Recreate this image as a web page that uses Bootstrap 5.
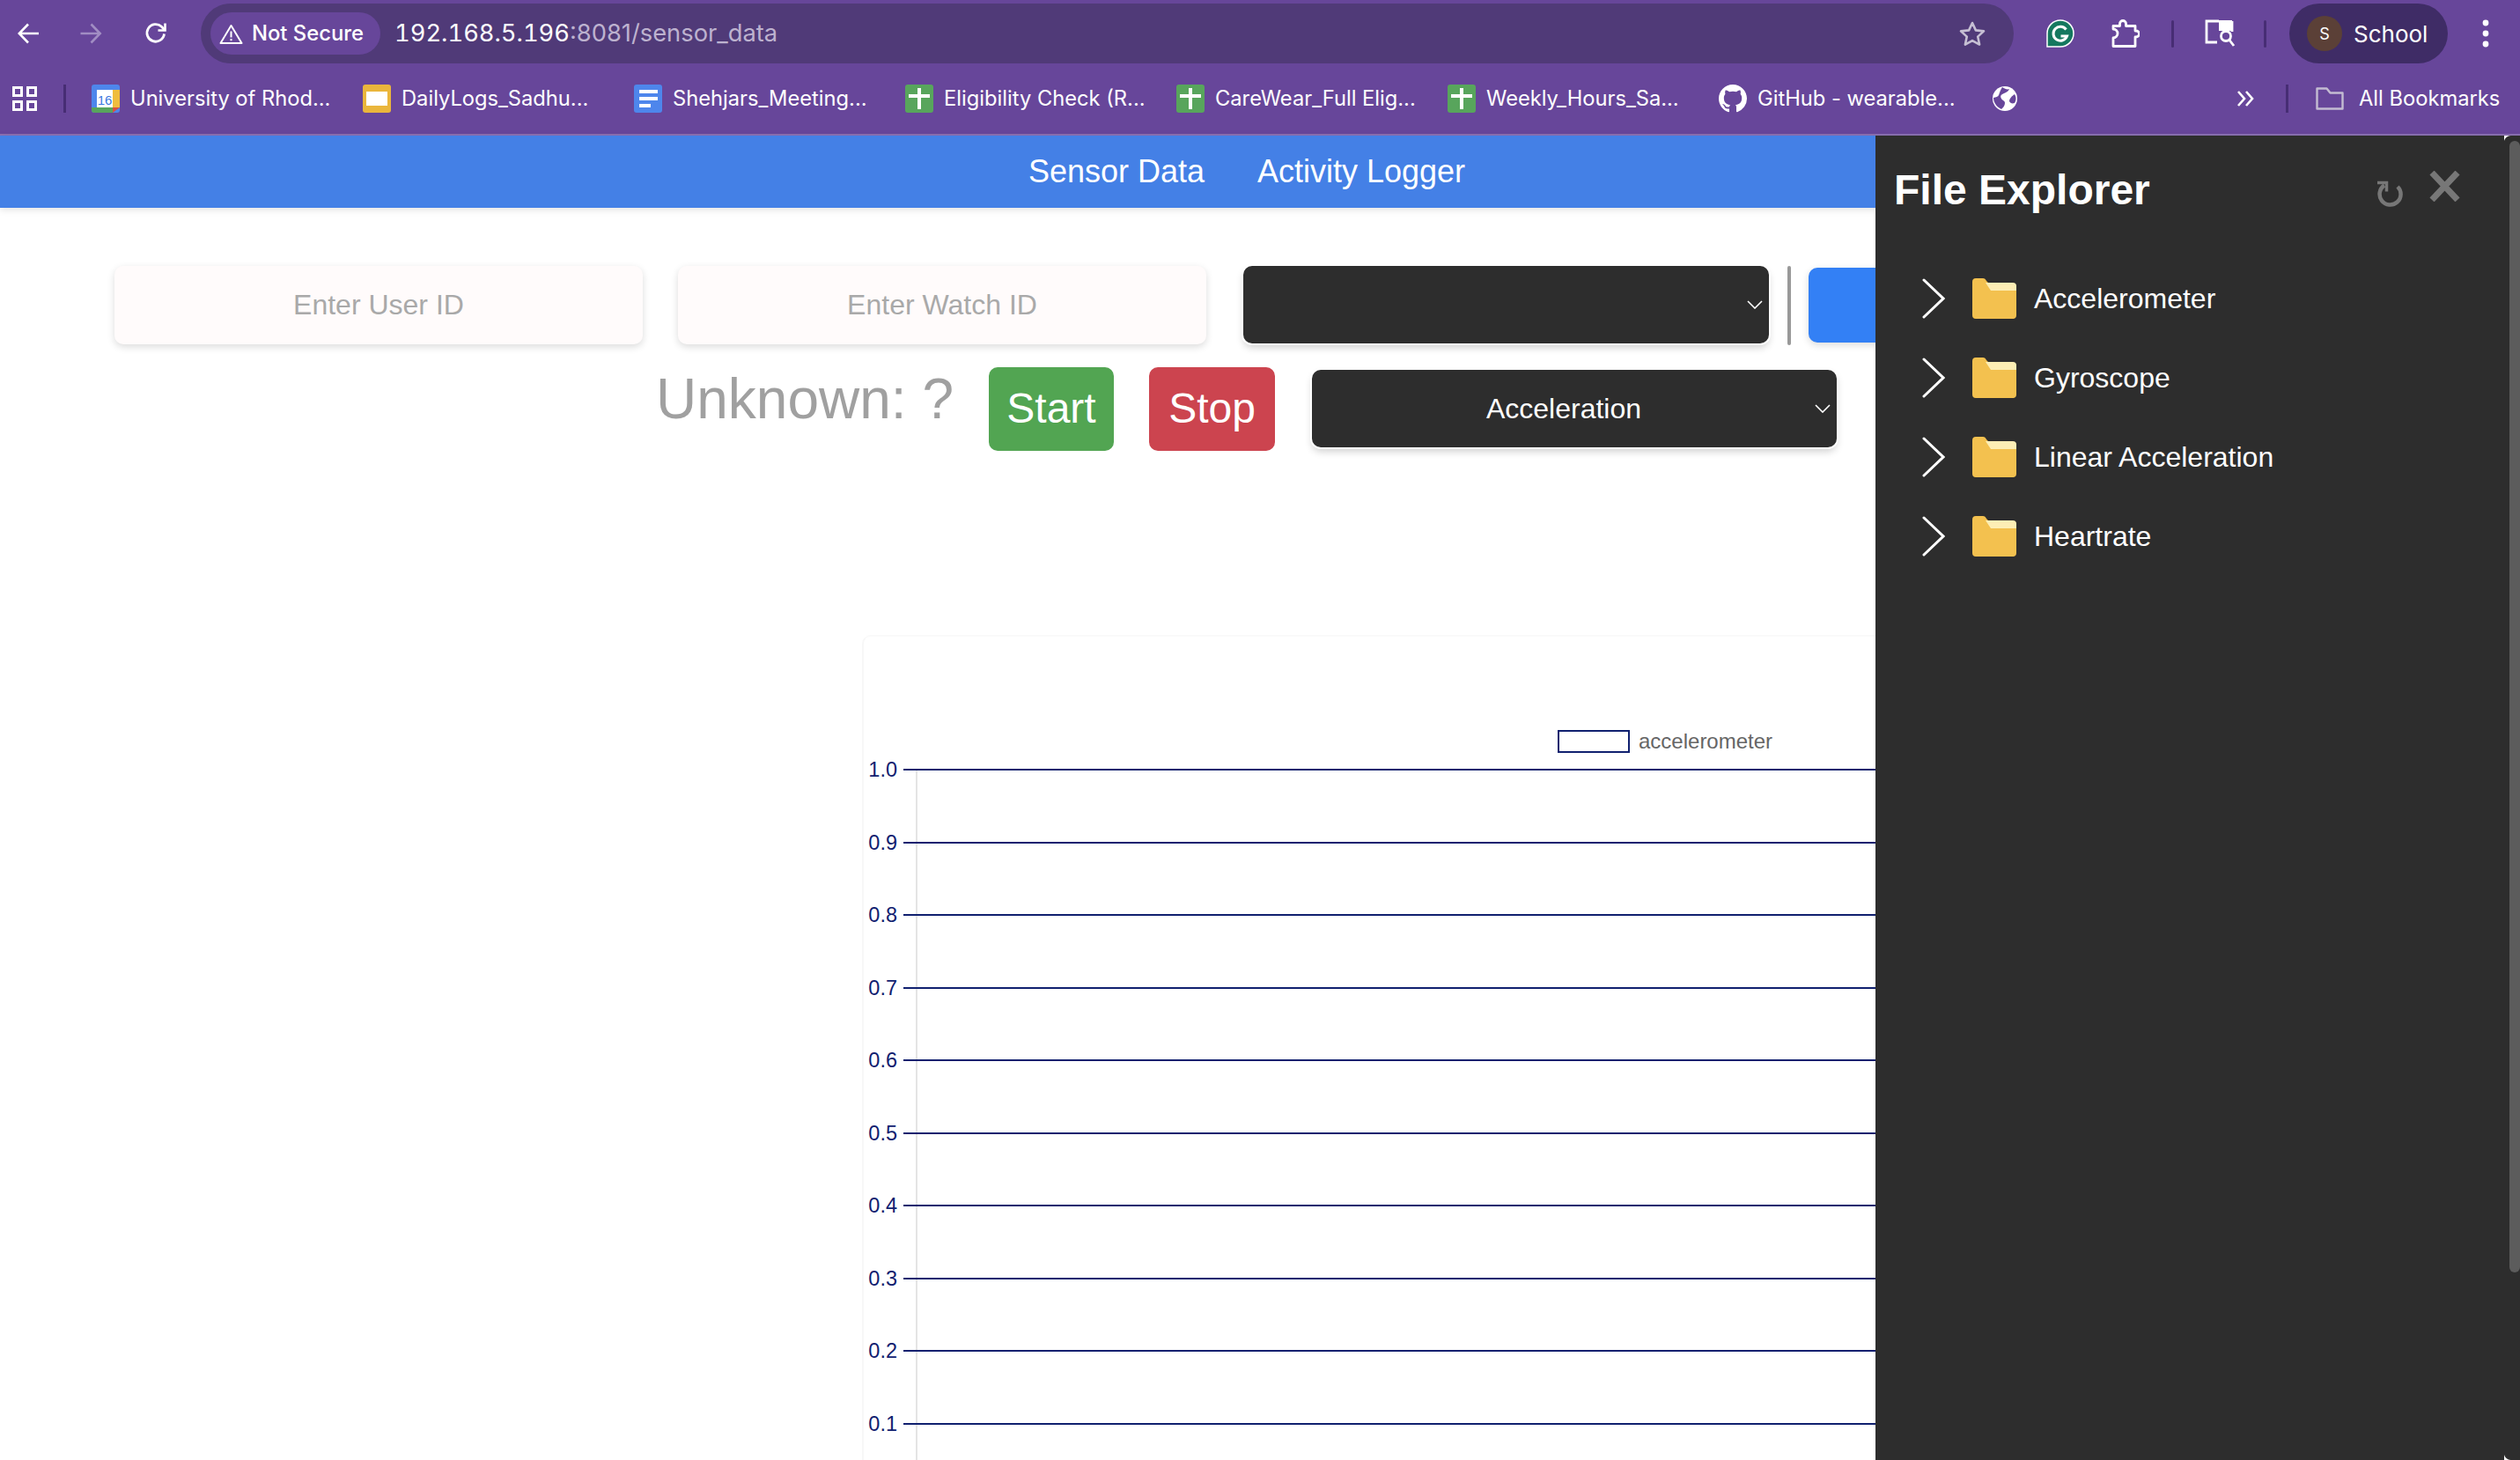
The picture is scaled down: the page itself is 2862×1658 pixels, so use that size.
<!DOCTYPE html>
<html lang="en">
<head>
  <meta charset="UTF-8">
  <meta name="viewport" content="width=device-width, initial-scale=1.0">
  <title>Sensor Data</title>
  <link href="https://cdn.jsdelivr.net/npm/bootstrap@5.3.3/dist/css/bootstrap.min.css" rel="stylesheet">
  <style>
    html, body {
      height: 1658px;
      overflow: hidden;
    }

    body {
      position: relative;
      background: #fff;
      font-family: "Liberation Sans", Arial, sans-serif;
    }

    /* browser chrome */
    .chrome {
      background: #67469a;
      border-bottom: 2px solid #8b70b3;
      color: #fff;
      font-family: Inter, "Liberation Sans", sans-serif;
    }

    .toolbar { height: 76px; }
    .toolbar svg, .marks svg { display: block; flex: none; }
    .t-back { margin-left: 20px; }
    .t-fwd { margin-left: 47px; }
    .t-reload { margin-left: 48px; }

    .addr {
      margin-left: 38px;
      width: 2059px;
      height: 68px;
      background: #503a78;
      border-radius: 34px;
      padding: 0 31px 0 11px;
    }

    .warn-pill {
      width: 193px;
      height: 48px;
      background: #67469a;
      border-radius: 24px;
      padding-left: 10px;
      gap: 10px;
      font-size: 23.8px;
      font-weight: 500;
    }

    .url {
      margin-left: 16px;
      font-size: 27.3px;
      color: #fff;
      font-variant-numeric: tabular-nums;
    }

    .url span { color: #bdb2cf; font-variant-numeric: normal; }
    .t-gram { margin-left: 37px; }
    .t-puzzle { margin-left: 42px; }
    .t-sep { width: 3px; height: 31px; background: #472d74; border-radius: 2px; flex: none; }
    .t-sep1 { margin-left: 36px; }
    .t-search { margin-left: 35px; }
    .t-sep2 { margin-left: 32px; }

    .profile {
      margin-left: 26px;
      width: 180px;
      height: 68px;
      background: #3f2c66;
      border-radius: 34px;
      padding-left: 20px;
      font-size: 26px;
    }

    .avatar {
      width: 40px;
      height: 40px;
      border-radius: 50%;
      background: #5b4037;
      font-size: 18px;
      margin-right: 13px;
    }

    .t-dots { margin-left: 39px; }

    .marks {
      height: 76px;
      padding-left: 14px;
      padding-bottom: 4px;
      font-size: 23.7px;
    }

    .mark-sep { width: 3px; height: 32px; background: #472d74; margin-left: 30px; margin-right: 29px; flex: none; }
    .mark-item { width: 308px; flex: none; gap: 12px; white-space: nowrap; }
    .mark-globe { margin-left: 3px; margin-right: 249px; }
    .mark-more { margin-right: 35px; }
    .mark-sep2 { margin: 0 31px 0 0; }
    .mark-all { margin-left: 17px; white-space: nowrap; }

    /* page */
    .top-nav {
      height: 82px;
      padding: 0 30px 0 0;
      background: #4480e6;
      box-shadow: 0 2px 8px rgba(0, 0, 0, .12);
    }

    .top-nav .nav-link {
      color: #fff;
      font-size: 36px;
      padding: 0 30px;
    }

    .form-one {
      margin-top: 66px;
      margin-left: 130px;
      width: 2300px;
    }

    .id-input {
      width: 600px;
      height: 89px;
      flex: none;
      background: #fffbfb;
      border: 0;
      border-radius: 10px;
      box-shadow: 0 3px 8px rgba(0, 0, 0, .14);
      font-size: 32px;
      text-align: center;
    }

    .id-input::placeholder { color: #a9a9a9; opacity: 1; }
    .id-gap { margin-left: 40px; }

    .dark-select {
      flex: none;
      width: 597px;
      height: 88px;
      background-color: #2d2d2d;
      background-image: url("data:image/svg+xml,%3csvg xmlns='http://www.w3.org/2000/svg' viewBox='0 0 18 10'%3e%3cpath fill='none' stroke='%23fff' stroke-width='1.6' d='M1 1l8 8 8-8'/%3e%3c/svg%3e");
      background-position: right 7px center;
      background-size: 18px 10px;
      border: 0;
      border-radius: 10px;
      box-shadow: 0 0 0 2px #fff, 0 5px 9px rgba(0, 0, 0, .18);
      color: #fff;
      font-size: 32px;
      text-align: center;
    }

    .select-gap { margin-left: 42px; }
    .v-rule { width: 4px; height: 90px; background: #999; margin-left: 21px; flex: none; border-radius: 2px; }

    .go-btn {
      width: 200px;
      height: 85px;
      flex: none;
      margin-left: 20px;
      margin-top: 2px;
      background: #3380f5;
      border: 0;
      border-radius: 10px;
      box-shadow: 0 3px 8px rgba(0, 0, 0, .14);
    }

    .form-two {
      margin-top: 24px;
      margin-left: 745px;
    }

    .state-label {
      font-size: 64px;
      line-height: 74px;
      color: #a0a0a0;
      margin-bottom: 22px;
      width: 378px;
      flex: none;
    }

    .act-btn {
      width: 142px;
      height: 95px;
      border: 0;
      border-radius: 10px;
      color: #fff;
      font-size: 48px;
      padding: 0;
      flex: none;
    }

    .btn-start { background: #52a552; }
    .btn-stop { background: #cc444f; margin-left: 40px; width: 143px; }
    .form-two .dark-select { margin-left: 42px; width: 596px; }

    .chart-box {
      margin-top: 209px;
      margin-left: 979px;
      width: 1300px;
      height: 937px;
      border: 0;
      border-left: 2px solid #f7f7f7;
      border-top: 2px solid #fafafa;
      border-radius: 10px 0 0 0;
      background: #fff;
    }

    .chart-box svg { display: block; margin: -2px 0 0 -2px; }

    /* file panel, drawn over the page */
    .file-panel {
      position: absolute;
      top: 154px;
      left: 2130px;
      right: 0;
      bottom: 0;
      background: #2d2d2d;
      color: #fff;
    }

    .panel-head {
      height: 140px;
      padding: 32px 68px 0 21px;
    }

    .panel-title {
      font-size: 48px;
      line-height: 60px;
      font-weight: 700;
      margin: 0;
    }

    .panel-tools { padding-top: 8px; gap: 29px; }
    .tool-refresh { margin-top: 11px; }
    .tree-row {
      height: 90px;
      padding-left: 53px;
      font-size: 32px;
    }

    .tree-row .folder { margin-left: 31px; margin-right: 20px; }
    .tree-row svg { display: block; flex: none; }

    .panel-scroll {
      position: absolute;
      top: 6px;
      right: 0;
      width: 12px;
      height: 1285px;
      background: #5c5c5c;
      border-radius: 6px;
    }

    .corner-top, .corner-bot { position: absolute; display: block; }
    .corner-top { top: 0; right: 10px; }
    .corner-bot { bottom: 0; right: 10px; }
  </style>
</head>
<body>
  <div class="chrome">
    <div class="toolbar d-flex align-items-center">
      <svg class="t-back" width="24" height="24" viewBox="0 0 24 24" fill="none" stroke="#fff" stroke-width="2.6"><path d="M24 12H2M12 1.5L1.8 12 12 22.5"/></svg>
      <svg class="t-fwd" width="25" height="24" viewBox="0 0 24 24" fill="none" stroke="#a18dc3" stroke-width="2.6"><path d="M0 12h22M12 1.5L22.2 12 12 22.5"/></svg>
      <svg class="t-reload" width="26" height="26" viewBox="0 0 26 26" fill="none" stroke="#fff" stroke-width="2.8"><path d="M22.5 13.5a9.8 9.8 0 1 1-3-8.2L23 9"/><path d="M23.5 1.5V9.5H15.5" stroke-width="2.6"/></svg>

      <div class="addr d-flex align-items-center flex-none">
        <div class="warn-pill d-flex align-items-center flex-shrink-0">
          <svg width="27" height="23" viewBox="0 0 27 23" fill="none" stroke="#fff" stroke-width="2"><path d="M13.5 2L25.5 22H1.5z" stroke-linejoin="round"/><path d="M13.5 8.5v7M13.5 17v2.2"/></svg>
          <span>Not Secure</span>
        </div>
        <div class="url">192.168.5.196<span>:8081/sensor_data</span></div>
        <svg class="ms-auto" width="32" height="30" viewBox="0 0 32 30" fill="none" stroke="#c6bfd3" stroke-width="2.6"><path d="M16 3l3.9 8.4 9.1 1-6.8 6.2 1.9 9L16 23.1 7.900 27.600l1.900-9L3 12.400l9.100-1z" stroke-linejoin="round"/></svg>
      </div>

      <svg class="t-gram" width="32" height="32" viewBox="0 0 32 32"><path d="M1 31V16a15 15 0 1 1 15 15z" fill="#15785f" stroke="#fff" stroke-width="1.500"/><path d="M22.500 11.500a8 8 0 1 0 1 7.500h-7" fill="none" stroke="#fff" stroke-width="3"/></svg>
      <svg class="t-puzzle" width="32" height="32" viewBox="0 0 32 32" fill="none" stroke="#fff" stroke-width="2.800"><path d="M2 7.500h7.500V5a3.500 3.500 0 0 1 7 0v2.500h10.500V13h1a3.500 3.500 0 0 1 0 7h-1v10.500H2V21a5 5 0 0 0 0-10z" stroke-linejoin="round"/></svg>
      <div class="t-sep t-sep1"></div>
      <svg class="t-search t-icon" width="35" height="32" viewBox="0 0 35 32" fill="none" stroke="#fff" stroke-width="2.800"><path d="M14 26H2V2h14"/><path d="M16 1h15v12H16z" fill="#fff" stroke="none"/><path d="M31 2v12"/><circle cx="24" cy="19" r="5.500"/><path d="M28 23.500l5 6.500"/></svg>
      <div class="t-sep t-sep2"></div>
      <div class="profile d-flex align-items-center flex-shrink-0">
        <div class="avatar d-flex align-items-center justify-content-center">S</div>
        <span>School</span>
      </div>
      <svg class="t-dots" width="8" height="32" viewBox="0 0 8 32" fill="#fff"><circle cx="4" cy="4" r="3.400"/><circle cx="4" cy="16" r="3.400"/><circle cx="4" cy="28" r="3.400"/></svg>
    </div>

    <div class="marks d-flex align-items-center">
      <svg width="28" height="28" viewBox="0 0 28 28" fill="none" stroke="#fff" stroke-width="3"><path d="M1.500 1.500h9v9h-9zM17.500 1.500h9v9h-9zM1.500 17.500h9v9h-9zM17.500 17.500h9v9h-9z"/></svg>
      <div class="mark-sep"></div>

      <div class="mark-item d-flex align-items-center">
        <svg width="32" height="32" viewBox="0 0 32 32">
          <rect width="32" height="32" rx="3" fill="#4e86ec"/>
          <path d="M24 6h8v20h-8z" fill="#efbd3d"/>
          <path d="M0 26h24v6H3a3 3 0 0 1-3-3z" fill="#58a55c"/>
          <path d="M24 26h8l-8 6z" fill="#d9503f"/>
          <rect x="6" y="6" width="18" height="20" fill="#fff"/>
          <text x="15" y="22.500" font-size="15" font-family="Liberation Sans" fill="#3b78e0" text-anchor="middle">16</text>
        </svg>
        <span>University of Rhod...</span>
      </div>
      <div class="mark-item d-flex align-items-center">
        <svg width="32" height="32" viewBox="0 0 32 32"><rect width="32" height="32" rx="3" fill="#eab63c"/><rect x="4" y="8" width="24" height="16" fill="#fff"/></svg>
        <span>DailyLogs_Sadhu...</span>
      </div>
      <div class="mark-item d-flex align-items-center">
        <svg width="32" height="32" viewBox="0 0 32 32"><rect width="32" height="32" rx="3" fill="#4e86ec"/><path d="M6 6h21v4H6zM6 14h21v4H6zM6 22h13v4H6z" fill="#fff"/></svg>
        <span>Shehjars_Meeting...</span>
      </div>
      <div class="mark-item d-flex align-items-center">
        <svg width="32" height="32" viewBox="0 0 32 32"><rect width="32" height="32" rx="3" fill="#58a55c"/><path d="M14 4h4v24h-4zM4 11h24v4H4z" fill="#fff"/></svg>
        <span>Eligibility Check (R...</span>
      </div>
      <div class="mark-item d-flex align-items-center">
        <svg width="32" height="32" viewBox="0 0 32 32"><rect width="32" height="32" rx="3" fill="#58a55c"/><path d="M14 4h4v24h-4zM4 11h24v4H4z" fill="#fff"/></svg>
        <span>CareWear_Full Elig...</span>
      </div>
      <div class="mark-item d-flex align-items-center">
        <svg width="32" height="32" viewBox="0 0 32 32"><rect width="32" height="32" rx="3" fill="#58a55c"/><path d="M14 4h4v24h-4zM4 11h24v4H4z" fill="#fff"/></svg>
        <span>Weekly_Hours_Sa...</span>
      </div>
      <div class="mark-item d-flex align-items-center">
        <svg width="32" height="32" viewBox="0 0 16 16" fill="#fff"><path d="M8 0C3.580 0 0 3.580 0 8c0 3.540 2.290 6.530 5.470 7.590.4.070.55-.17.55-.38 0-.19-.01-.82-.01-1.490-2.010.37-2.530-.49-2.690-.94-.09-.23-.48-.94-.82-1.130-.28-.15-.68-.52-.01-.53.63-.01 1.080.58 1.230.82.72 1.210 1.870.87 2.330.66.07-.52.28-.87.51-1.070-1.780-.2-3.640-.89-3.640-3.950 0-.87.31-1.590.82-2.150-.08-.2-.36-1.020.08-2.120 0 0 .67-.21 2.200.82.64-.18 1.320-.27 2-.27.68 0 1.360.09 2 .27 1.530-1.040 2.200-.82 2.200-.82.44 1.100.16 1.920.08 2.120.51.56.82 1.270.82 2.150 0 3.070-1.870 3.750-3.650 3.950.29.25.54.73.54 1.480 0 1.070-.01 1.930-.01 2.200 0 .21.15.46.55.38A8.013 8.013 0 0016 8c0-4.420-3.580-8-8-8z"/></svg>
        <span>GitHub - wearable...</span>
      </div>

      <svg class="mark-globe flex-shrink-0" width="28" height="28" viewBox="0 0 28 28"><circle cx="14" cy="14" r="14" fill="#fff"/><path d="M11 1c3 2 6 3 8 2-1 3-4 4-6 5-3 1-5 3-3 6 1 2 4 2 4 5 0 3-2 5-4 7C4 23 1 18 1 13c3-1 5-1 6-3 1-3 2-6 4-9zM25 9c2 3 2 7 0 10-3 1-5 0-6-2 0-3 3-6 6-8z" fill="#67469a"/></svg>
      <svg class="mark-more flex-shrink-0" width="21" height="18" viewBox="0 0 21 18" fill="none" stroke="#fff" stroke-width="2.600"><path d="M2 1l7 8-7 8M11 1l7 8-7 8"/></svg>
      <div class="mark-sep mark-sep2"></div>
      <svg class="flex-shrink-0" width="32" height="26" viewBox="0 0 32 26" fill="none" stroke="#c4bcd2" stroke-width="2.400"><path d="M1.500 24.500V1.500h11l4 5h14v18z" stroke-linejoin="round"/></svg>
      <span class="mark-all">All Bookmarks</span>
    </div>
  </div>

  <nav class="navbar top-nav justify-content-center">
    <ul class="navbar-nav flex-row">
      <li class="nav-item"><a class="nav-link" href="#">Sensor Data</a></li>
      <li class="nav-item"><a class="nav-link" href="#">Activity Logger</a></li>
    </ul>
  </nav>

  <div class="form-one d-flex align-items-start">
    <input class="form-control id-input" type="text" placeholder="Enter User ID">
    <input class="form-control id-input id-gap" type="text" placeholder="Enter Watch ID">
    <select class="form-select dark-select select-gap"><option></option></select>
    <div class="v-rule"></div>
    <button class="btn go-btn" type="button" aria-label="Connect"></button>
  </div>

  <div class="form-two d-flex align-items-center">
    <div class="state-label">Unknown: ?</div>
    <button class="btn act-btn btn-start" type="button">Start</button>
    <button class="btn act-btn btn-stop" type="button">Stop</button>
    <select class="form-select dark-select"><option>Acceleration</option></select>
  </div>

  <div class="card chart-box">
    <svg id="plot" width="1300" height="937" viewBox="979 721 1300 937" font-family="Liberation Sans, Arial, sans-serif">
      <rect x="1770" y="830" width="80" height="24" fill="#fff" stroke="#10206f" stroke-width="2"/>
      <text x="1861" y="850" font-size="24" fill="#666">accelerometer</text>
      <line x1="1041" y1="874" x2="1041" y2="1658" stroke="#e4e4e4" stroke-width="2"/>
    </svg>
  </div>

  <aside class="file-panel">
    <div class="panel-head d-flex justify-content-between align-items-start">
      <h2 class="panel-title">File Explorer</h2>
      <div class="panel-tools d-flex align-items-start">
        <svg class="tool-refresh" width="30" height="31" viewBox="0 0 30 31" fill="none" stroke="#777" stroke-width="4.500"><path d="M8 5.500A12 12 0 1 0 23 7"/><path d="M0 2.500h10.500v10" stroke-width="3.500"/></svg>
        <svg width="35" height="35" viewBox="0 0 35 35" fill="none" stroke="#777" stroke-width="7"><path d="M3 2l29 31M32 2L3 33"/></svg>
      </div>
    </div>

    <ul class="list-unstyled m-0" id="tree"></ul>

    <div class="panel-scroll"></div>
    <svg class="corner-top" width="8" height="10" viewBox="0 0 8 10"><path d="M0 10V0h8a8 8 0 0 0-8 10z" fill="#fff"/></svg>
    <svg class="corner-bot" width="8" height="10" viewBox="0 0 8 10"><path d="M0 0v10h8a8 8 0 0 1-8-10z" fill="#fff"/></svg>
  </aside>

  <script src="https://cdn.jsdelivr.net/npm/bootstrap@5.3.3/dist/js/bootstrap.bundle.min.js"></script>
  <script>
    // y axis ticks and horizontal lines, 1.0 down to 0.1
    const plot = document.getElementById("plot");
    const NS = "http://www.w3.org/2000/svg";
    for (let i = 0; i < 10; i++) {
      const y = Math.round(874 + i * 82.55);
      const line = document.createElementNS(NS, "line");
      line.setAttribute("x1", 1026);
      line.setAttribute("x2", 2279);
      line.setAttribute("y1", y);
      line.setAttribute("y2", y);
      line.setAttribute("stroke", "#10206f");
      line.setAttribute("stroke-width", 2);
      plot.appendChild(line);

      const label = document.createElementNS(NS, "text");
      label.setAttribute("x", 1019);
      label.setAttribute("y", y + 8);
      label.setAttribute("text-anchor", "end");
      label.setAttribute("font-size", 23.5);
      label.setAttribute("fill", "#10206f");
      label.textContent = ((10 - i) / 10).toFixed(1);
      plot.appendChild(label);
    }

    const carpetas = ["Accelerometer", "Gyroscope", "Linear Acceleration", "Heartrate"];
    const tree = document.getElementById("tree");
    carpetas.forEach(nombre => {
      const li = document.createElement("li");
      li.className = "tree-row d-flex align-items-center";
      li.innerHTML = `
        <svg width="26" height="46" viewBox="0 0 26 46" fill="none" stroke="#fff" stroke-width="3" stroke-linecap="round"><path d="M2 2l22 21L2 44"/></svg>
        <svg class="folder" width="50" height="46" viewBox="0 0 50 46">
          <path d="M0 4a4 4 0 0 1 4-4h8c2 0 3 1 4 3l3 3h27a4 4 0 0 1 4 4v32a4 4 0 0 1-4 4H4a4 4 0 0 1-4-4z" fill="#f3c14f"/>
          <path d="M15 5h31a4 4 0 0 1 4 4v5H21z" fill="#fdeeb5"/>
        </svg>
        <span>${nombre}</span>
      `;
      tree.appendChild(li);
    });
  </script>
</body>
</html>
